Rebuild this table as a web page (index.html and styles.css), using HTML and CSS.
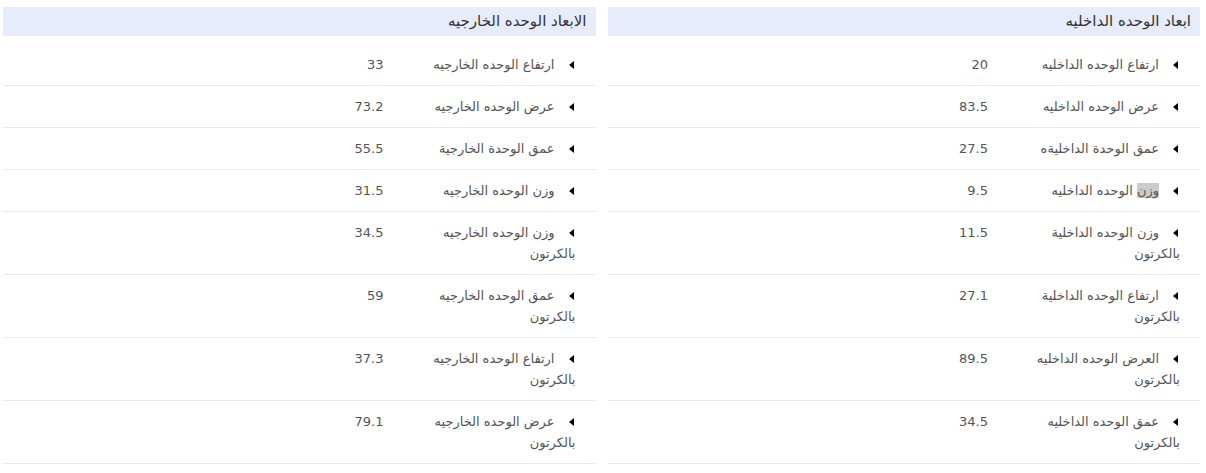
FILE: index.html
```html
<!DOCTYPE html>
<html lang="ar" dir="rtl">
<head>
<meta charset="utf-8">
<link rel="stylesheet" href="styles.css">
</head>
<body>
<div class="page">
  <section class="panel">
    <h3 class="panel-title">ابعاد الوحده الداخليه</h3>
    <div class="rows">
      <div class="row"><div class="label"><span class="tri"></span>ارتفاع الوحده الداخليه</div><div class="value">20</div></div>
      <div class="row"><div class="label"><span class="tri"></span>عرض الوحده الداخليه</div><div class="value">83.5</div></div>
      <div class="row"><div class="label"><span class="tri"></span>عمق الوحدة الداخليةه</div><div class="value">27.5</div></div>
      <div class="row"><div class="label"><span class="tri"></span><span class="sel">وزن</span> الوحده الداخليه</div><div class="value">9.5</div></div>
      <div class="row"><div class="label"><span class="tri"></span>وزن الوحده الداخلية بالكرتون</div><div class="value">11.5</div></div>
      <div class="row"><div class="label"><span class="tri"></span>ارتفاع الوحده الداخلية بالكرتون</div><div class="value">27.1</div></div>
      <div class="row"><div class="label"><span class="tri"></span>العرض الوحده الداخليه بالكرتون</div><div class="value">89.5</div></div>
      <div class="row"><div class="label"><span class="tri"></span>عمق الوحده الداخليه بالكرتون</div><div class="value">34.5</div></div>
    </div>
  </section>
  <section class="panel">
    <h3 class="panel-title">الابعاد الوحده الخارجيه</h3>
    <div class="rows">
      <div class="row"><div class="label"><span class="tri"></span>ارتفاع الوحده الخارجيه</div><div class="value">33</div></div>
      <div class="row"><div class="label"><span class="tri"></span>عرض الوحده الخارجيه</div><div class="value">73.2</div></div>
      <div class="row"><div class="label"><span class="tri"></span>عمق الوحدة الخارجية</div><div class="value">55.5</div></div>
      <div class="row"><div class="label"><span class="tri"></span>وزن الوحده الخارجيه</div><div class="value">31.5</div></div>
      <div class="row"><div class="label"><span class="tri"></span>وزن الوحده الخارجيه بالكرتون</div><div class="value">34.5</div></div>
      <div class="row"><div class="label"><span class="tri"></span>عمق الوحده الخارجيه بالكرتون</div><div class="value">59</div></div>
      <div class="row"><div class="label"><span class="tri"></span>ارتفاع الوحده الخارجيه بالكرتون</div><div class="value">37.3</div></div>
      <div class="row"><div class="label"><span class="tri"></span>عرض الوحده الخارجيه بالكرتون</div><div class="value">79.1</div></div>
    </div>
  </section>
</div>
</body>
</html>
```
FILE: styles.css
```css
html, body {
  margin: 0;
  padding: 0;
  background: #ffffff;
}
body {
  font-family: "DejaVu Sans", "Noto Sans", sans-serif;
  color: #555555;
  font-size: 13px;
}
.page {
  display: grid;
  grid-template-columns: 1fr 1fr;
  gap: 12px;
  padding: 7px 6px 0 3px;
}
.panel-title {
  margin: 0;
  height: 29px;
  line-height: 29px;
  padding: 0 9px;
  background: #e7ecfc;
  color: #333333;
  font-size: 15px;
  font-weight: normal;
}
.rows {
  padding-top: 8px;
}
.row {
  display: flex;
  border-bottom: 1px solid #e9e9e9;
  padding: 10px 0;
  line-height: 21px;
}
.label {
  box-sizing: border-box;
  width: 200px;
  padding: 0 20px 0 12px;
  flex: none;
}
.value {
  padding-right: 12px;
}
.tri {
  display: inline-block;
  width: 0;
  height: 0;
  border-top: 4px solid transparent;
  border-bottom: 4px solid transparent;
  border-right: 5px solid #000000;
  margin-left: 14px;
  margin-right: 2px;
  vertical-align: 0;
}
.sel {
  background: #cbcbcb;
}
```
